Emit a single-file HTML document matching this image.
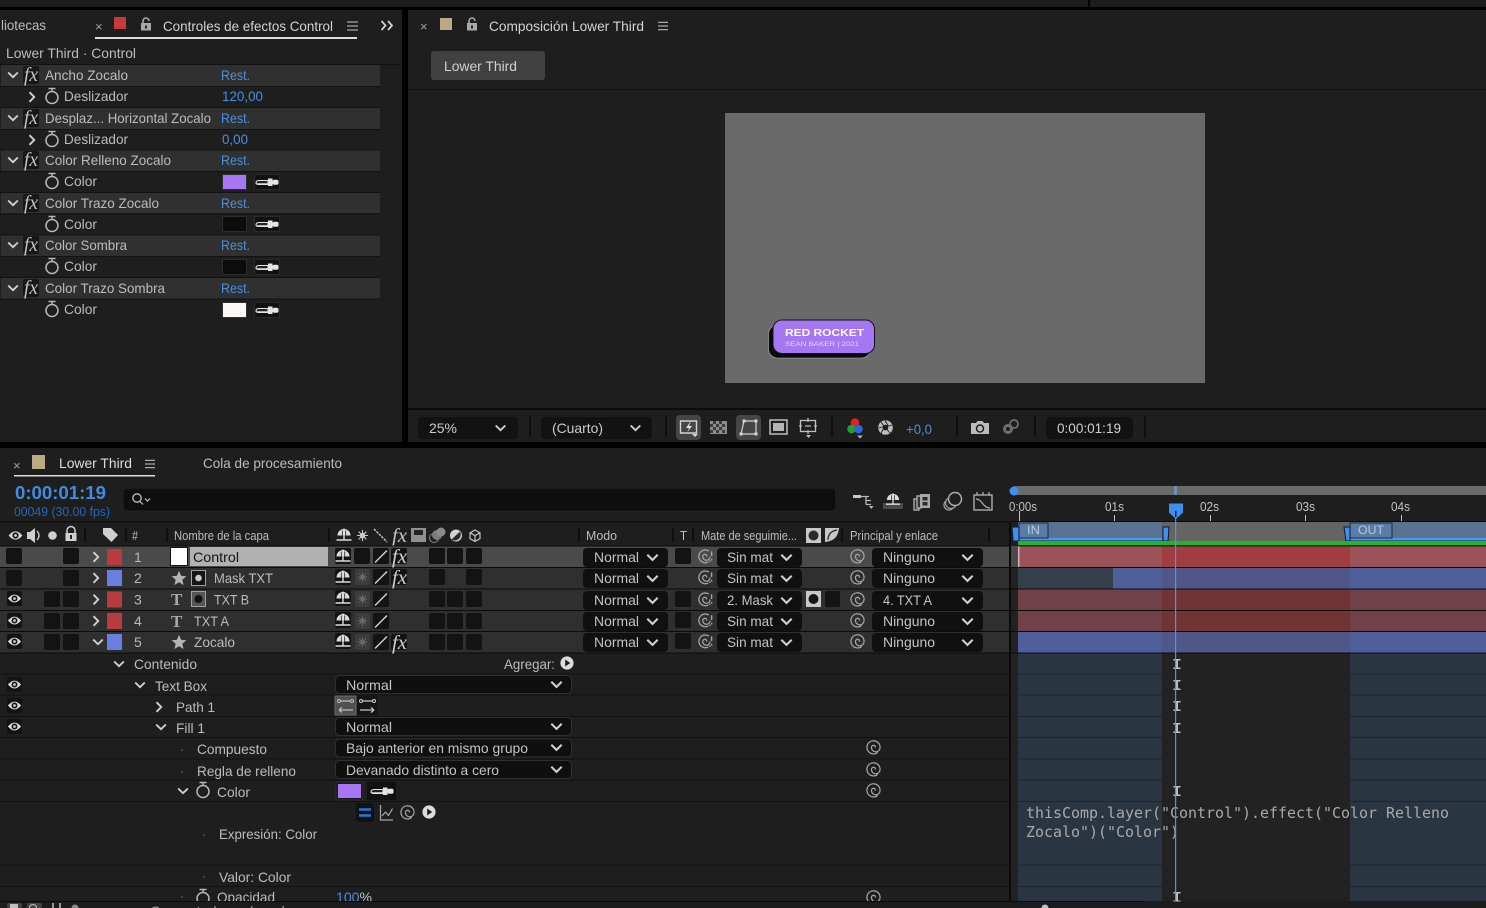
<!DOCTYPE html>
<html><head><meta charset="utf-8"><title>After Effects</title>
<style>
html,body{margin:0;padding:0;background:#000;width:1486px;height:908px;overflow:hidden}
svg{display:block}
text{white-space:pre}
</style></head><body>
<svg width="1486" height="908" viewBox="0 0 1486 908" xmlns="http://www.w3.org/2000/svg" font-family="'Liberation Sans',sans-serif" font-size="14" fill="#bcbcbc">
<defs>
<symbol id="cd" viewBox="0 0 12 8"><path d="M1.2 1.5L6 6.2L10.8 1.5" fill="none" stroke="#d0d0d0" stroke-width="1.9"/></symbol>
<symbol id="cr" viewBox="0 0 8 12"><path d="M1.5 1.2L6.2 6L1.5 10.8" fill="none" stroke="#d0d0d0" stroke-width="1.9"/></symbol>
<symbol id="sw" viewBox="0 0 16 18"><circle cx="8" cy="10.5" r="6" fill="none" stroke="#b8b8b8" stroke-width="1.5"/><path d="M4.5 1.5h7M8 1.5v3" stroke="#b8b8b8" stroke-width="1.4"/></symbol>
<symbol id="eye" viewBox="0 0 16 12"><path d="M.5 6Q8 -3 15.500 6Q8 15 .5 6Z" fill="#dcdcdc"/><circle cx="8" cy="6" r="3.4" fill="#171717"/><circle cx="8" cy="6" r="1.5" fill="#dcdcdc"/></symbol>
<symbol id="sp" viewBox="0 0 16 16"><path d="M12.500 13.200A7 7 0 1 1 15 8A4.600 4.600 0 0 1 10.400 12.600A4.600 4.600 0 0 1 5.800 8A2.400 2.400 0 0 1 8.200 5.600A2 2 0 0 1 10 8" fill="none" stroke="#a6a6a6" stroke-width="1.300"/></symbol>
<symbol id="sp2" viewBox="0 0 16 16"><path d="M11 13.800A6.800 6.800 0 1 1 11.500 2.200M13 8A4 4 0 0 1 9 12A4 4 0 0 1 5 8A2.400 2.400 0 0 1 7.400 5.600A2 2 0 0 1 9.200 8" fill="none" stroke="#a6a6a6" stroke-width="1.300"/><path d="M14.500 2.500v5M14.500 10.500v1.800M12 13h1.500" stroke="#a6a6a6" stroke-width="1.500"/></symbol>
<symbol id="shy" viewBox="0 0 16 16"><path d="M1.500 8.500A6.500 6.500 0 0 1 14.500 8.500Z" fill="#dcdcdc"/><path d="M8 1.500v12M.5 13h15" stroke="#dcdcdc" stroke-width="1.400"/><path d="M6.300 3.500v5M9.700 3.500v5" stroke="#222" stroke-width=".8"/></symbol>
<symbol id="sun" viewBox="0 0 14 14"><circle cx="7" cy="7" r="3" fill="currentColor"/><path d="M7 1v12M1 7h12M2.800 2.800l8.400 8.400M11.200 2.800l-8.400 8.400" stroke="currentColor" stroke-width="1.200"/></symbol>
<symbol id="pk" viewBox="1 0 24 12"><path d="M2 7Q2 4.500 5 4.500L14 4.500L14 8.500L5 8.500Q2 8.500 2 7Z" fill="#222" stroke="#e4e4e4" stroke-width="1.100"/><path d="M2.500 7.200L14 7.200V8.700H5Z" fill="#e4e4e4"/><rect x="14" y="2.500" width="4.500" height="7.500" fill="#e4e4e4"/><rect x="18.500" y="3.800" width="6" height="5" rx="1.500" fill="#e4e4e4"/></symbol>
<symbol id="menu" viewBox="0 0 11 10"><path d="M0 1h11M0 5h11M0 9h11" stroke="#a8a8a8" stroke-width="1.300"/></symbol>
<symbol id="lock" viewBox="0 0 12 14"><path d="M3 6V4a3 3 0 0 1 6 0" fill="none" stroke="#a8a8a8" stroke-width="1.600"/><rect x="1" y="6" width="10" height="7.500" fill="#a8a8a8"/><rect x="5" y="8.500" width="2" height="3" fill="#222"/></symbol>
<symbol id="ibeam" viewBox="0 0 8 10"><path d="M.5 .8h7M.5 9.200h7" stroke="#c0c0c0" stroke-width="1.500"/><path d="M4 .8v8.400" stroke="#c0c0c0" stroke-width="2"/></symbol>
<symbol id="star" viewBox="0 0 16 16"><path d="M8 .8L10.100 5.800L15.400 6.200L11.300 9.700L12.600 15L8 12.200L3.400 15L4.700 9.700L.6 6.200L5.900 5.800Z" fill="#b4b4b4"/></symbol>
<symbol id="play" viewBox="0 0 14 14"><circle cx="7" cy="7" r="6.600" fill="#dcdcdc"/><path d="M5.200 3.500L10.200 7L5.200 10.500Z" fill="#1c1c1c"/></symbol>
<g id="ddl"><rect width="85" height="19" rx="4" fill="#101010"/></g>
<g id="b15"><rect width="16" height="16" rx="2" fill="#131313"/></g>
<g id="slash"><rect width="16" height="16" rx="2" fill="#131313"/><path d="M2 14.500L14 2.500" stroke="#d0d0d0" stroke-width="1.500"/></g>
<g id="shybox"><rect width="16" height="16" rx="2" fill="#131313"/><use href="#shy" x="0" y="0" width="16" height="16"/></g>
<g id="sunbox" color="#6a6a6a"><rect width="15" height="16" rx="2" fill="#3c3c3c"/><use href="#sun" x="2" y="2.500" width="11" height="11"/></g>
<g id="eyebox"><rect width="15" height="15" rx="2" fill="#131313"/><use href="#eye" x=".5" y="2" width="14" height="11"/></g>
</defs>

<!-- background -->
<rect width="1486" height="908" fill="#000"/>
<rect width="1486" height="7" fill="#1c1c1c"/>
<rect x="1088" width="2" height="7" fill="#000"/>
<rect x="0" y="10" width="402" height="432" fill="#1e1e1e"/>
<rect x="408" y="10" width="1078" height="432" fill="#1e1e1e"/>
<rect x="0" y="448" width="1486" height="460" fill="#1e1e1e"/>

<!-- Effects panel -->
<text x="1" y="30" textLength="45" lengthAdjust="spacingAndGlyphs">liotecas</text>
<text x="95" y="31" font-size="13" fill="#a0a0a0">×</text>
<rect x="114" y="17" width="12" height="12" fill="#c63a3e"/>
<use href="#lock" x="140" y="17" width="12" height="14"/>
<text x="163" y="31" textLength="170" lengthAdjust="spacingAndGlyphs" fill="#d2d2d2">Controles de efectos Control</text>
<use href="#menu" x="347" y="21" width="11" height="10"/>
<path d="M381.500 21l4 4.500-4 4.500M388 21l4 4.500-4 4.500" fill="none" stroke="#d0d0d0" stroke-width="1.800"/>
<rect x="95" y="37" width="262" height="2" fill="#dcdcdc"/>
<text x="6" y="58" textLength="130" lengthAdjust="spacingAndGlyphs">Lower Third · Control</text>
<rect x="0" y="64" width="400" height="1" fill="#111"/>

<g fill="#303030">
<rect x="1" y="65" width="379" height="21"/><rect x="1" y="107.500" width="379" height="21.500"/><rect x="1" y="150" width="379" height="21"/><rect x="1" y="192" width="379" height="21"/><rect x="1" y="235" width="379" height="21"/><rect x="1" y="277" width="379" height="21.500"/>
</g>
<g fill="#121212">
<rect x="0" y="86" width="380" height="1"/><rect x="0" y="107" width="380" height="1"/><rect x="0" y="129" width="380" height="1"/><rect x="0" y="149.500" width="380" height="1"/><rect x="0" y="171" width="380" height="1"/><rect x="0" y="192" width="380" height="1"/><rect x="0" y="213.500" width="380" height="1"/><rect x="0" y="234.500" width="380" height="1"/><rect x="0" y="256" width="380" height="1"/><rect x="0" y="277" width="380" height="1"/><rect x="0" y="298.500" width="380" height="1"/>
</g>
<!-- fx boxes -->
<g fill="#161616">
<rect x="23" y="66" width="16" height="18" rx="2"/><rect x="23" y="109" width="16" height="18" rx="2"/><rect x="23" y="151" width="16" height="18" rx="2"/><rect x="23" y="194" width="16" height="18" rx="2"/><rect x="23" y="236" width="16" height="18" rx="2"/><rect x="23" y="279" width="16" height="18" rx="2"/>
</g>
<g font-family="'Liberation Serif',serif" font-style="italic" font-size="20" fill="#c4c4c4">
<text x="24" y="81" textLength="14" lengthAdjust="spacingAndGlyphs">fx</text><text x="24" y="124" textLength="14" lengthAdjust="spacingAndGlyphs">fx</text><text x="24" y="166" textLength="14" lengthAdjust="spacingAndGlyphs">fx</text><text x="24" y="209" textLength="14" lengthAdjust="spacingAndGlyphs">fx</text><text x="24" y="251" textLength="14" lengthAdjust="spacingAndGlyphs">fx</text><text x="24" y="294" textLength="14" lengthAdjust="spacingAndGlyphs">fx</text>
</g>
<use href="#cd" x="7" y="71" width="12" height="8"/><use href="#cd" x="7" y="114" width="12" height="8"/><use href="#cd" x="7" y="156" width="12" height="8"/><use href="#cd" x="7" y="199" width="12" height="8"/><use href="#cd" x="7" y="241" width="12" height="8"/><use href="#cd" x="7" y="284" width="12" height="8"/>
<use href="#cr" x="28" y="91" width="8" height="12"/><use href="#cr" x="28" y="134" width="8" height="12"/>
<use href="#sw" x="44" y="87" width="16" height="18"/><use href="#sw" x="44" y="130" width="16" height="18"/><use href="#sw" x="44" y="172" width="16" height="18"/><use href="#sw" x="44" y="215" width="16" height="18"/><use href="#sw" x="44" y="257" width="16" height="18"/><use href="#sw" x="44" y="300" width="16" height="18"/>

<text x="45" y="80" textLength="83" lengthAdjust="spacingAndGlyphs">Ancho Zocalo</text>
<text x="64" y="101" textLength="64" lengthAdjust="spacingAndGlyphs">Deslizador</text>
<text x="45" y="123" textLength="166" lengthAdjust="spacingAndGlyphs">Desplaz... Horizontal Zocalo</text>
<text x="64" y="144" textLength="64" lengthAdjust="spacingAndGlyphs">Deslizador</text>
<text x="45" y="165" textLength="126" lengthAdjust="spacingAndGlyphs">Color Relleno Zocalo</text>
<text x="64" y="186" textLength="33" lengthAdjust="spacingAndGlyphs">Color</text>
<text x="45" y="208" textLength="114" lengthAdjust="spacingAndGlyphs">Color Trazo Zocalo</text>
<text x="64" y="229" textLength="33" lengthAdjust="spacingAndGlyphs">Color</text>
<text x="45" y="250" textLength="82" lengthAdjust="spacingAndGlyphs">Color Sombra</text>
<text x="64" y="271" textLength="33" lengthAdjust="spacingAndGlyphs">Color</text>
<text x="45" y="293" textLength="120" lengthAdjust="spacingAndGlyphs">Color Trazo Sombra</text>
<text x="64" y="314" textLength="33" lengthAdjust="spacingAndGlyphs">Color</text>
<g fill="#4a8ee0">
<text x="221" y="80" textLength="29" lengthAdjust="spacingAndGlyphs">Rest.</text>
<text x="222" y="101" textLength="41" lengthAdjust="spacingAndGlyphs">120,00</text>
<text x="221" y="123" textLength="29" lengthAdjust="spacingAndGlyphs">Rest.</text>
<text x="222" y="144" textLength="26" lengthAdjust="spacingAndGlyphs">0,00</text>
<text x="221" y="165" textLength="29" lengthAdjust="spacingAndGlyphs">Rest.</text>
<text x="221" y="208" textLength="29" lengthAdjust="spacingAndGlyphs">Rest.</text>
<text x="221" y="250" textLength="29" lengthAdjust="spacingAndGlyphs">Rest.</text>
<text x="221" y="293" textLength="29" lengthAdjust="spacingAndGlyphs">Rest.</text>
</g>
<!-- swatches -->
<g stroke="#2e2e2e" stroke-width="1">
<rect x="222.500" y="174.500" width="24" height="15" fill="#a777f3"/>
<rect x="222.500" y="216.500" width="24" height="15" fill="#0c0c0c"/>
<rect x="222.500" y="259.500" width="24" height="15" fill="#0c0c0c"/>
<rect x="222.500" y="302.500" width="24" height="15" fill="#fdf8f8"/>
</g>
<g fill="#111" stroke="#2a2a2a"><rect x="254.500" y="174.500" width="25" height="15"/><rect x="254.500" y="216.500" width="25" height="15"/><rect x="254.500" y="259.500" width="25" height="15"/><rect x="254.500" y="302.500" width="25" height="15"/></g>
<use href="#pk" x="255" y="176" width="24" height="12"/><use href="#pk" x="255" y="218" width="24" height="12"/><use href="#pk" x="255" y="261" width="24" height="12"/><use href="#pk" x="255" y="304" width="24" height="12"/>

<!-- Composition panel -->
<text x="420" y="31" font-size="13" fill="#a0a0a0">×</text>
<rect x="440" y="18" width="12" height="12" fill="#bda983"/>
<use href="#lock" x="466" y="17" width="12" height="14"/>
<text x="489" y="31" textLength="155" lengthAdjust="spacingAndGlyphs" fill="#d2d2d2">Composición Lower Third</text>
<use href="#menu" x="658" y="21" width="10" height="10"/>
<rect x="431" y="51" width="114" height="29" rx="3" fill="#414141"/>
<text x="444" y="71" textLength="73" lengthAdjust="spacingAndGlyphs" fill="#d0d0d0">Lower Third</text>
<rect x="408" y="89" width="1078" height="1" fill="#121212"/>
<rect x="725" y="113" width="480" height="270" fill="#6a6a6a"/>
<!-- lower third -->
<rect x="768.500" y="325" width="102" height="33" rx="9" fill="#0a0a0a" stroke="#b9b3b3" stroke-width=".6"/>
<rect x="773" y="320" width="101.500" height="33.500" rx="9" fill="#a677f3" stroke="#15101e" stroke-width="1"/>
<text x="785" y="336" font-size="10" font-weight="bold" fill="#fff" textLength="79" lengthAdjust="spacingAndGlyphs">RED ROCKET</text>
<text x="785" y="346" font-size="6.500" fill="#e6d8fc" textLength="74" lengthAdjust="spacingAndGlyphs">SEAN BAKER | 2021</text>

<!-- viewer toolbar -->
<rect x="408" y="408" width="1078" height="2" fill="#0c0c0c"/>
<rect x="418" y="417" width="100" height="22" rx="4" fill="#121212"/>
<text x="429" y="433" textLength="28" lengthAdjust="spacingAndGlyphs" fill="#cccccc">25%</text>
<use href="#cd" x="494" y="424" width="13" height="8"/>
<rect x="541" y="417" width="111" height="22" rx="4" fill="#121212"/>
<text x="552" y="433" textLength="51" lengthAdjust="spacingAndGlyphs" fill="#cccccc">(Cuarto)</text>
<use href="#cd" x="629" y="424" width="13" height="8"/>
<g fill="#0e0e0e"><rect x="529" y="416" width="2" height="21"/><rect x="665" y="416" width="2" height="21"/><rect x="831" y="416" width="2" height="21"/><rect x="956" y="416" width="2" height="21"/><rect x="1034" y="416" width="2" height="21"/><rect x="1144" y="416" width="2" height="21"/></g>
<rect x="676" y="415" width="25" height="25" rx="4" fill="#454545"/>
<rect x="736" y="415" width="25" height="25" rx="4" fill="#454545"/>
<path d="M680.500 421h16v12h-16z" fill="none" stroke="#d4d4d4" stroke-width="1.400"/>
<path d="M690 422l-4 6h3l-1.500 4 4.500-6h-3l1.500-4z" fill="#e0e0e0"/>
<path d="M692 434h6l-3 3z" fill="#d4d4d4"/>
<g><rect x="710" y="421" width="17" height="13" fill="#8c8c8c"/><path d="M713 421h3v3h-3zM719 421h3v3h-3zM710 424h3v3h-3zM716 424h3v3h-3zM722 424h3v3h-3zM713 427h3v3h-3zM719 427h3v3h-3zM710 430h3v3h-3zM716 430h3v3h-3zM722 430h3v3h-3z" fill="#3c3c3c"/></g>
<path d="M744 421h12v13h-15z" fill="none" stroke="#d4d4d4" stroke-width="1.200"/>
<path d="M742.500 419.500h3v3h-3zM754.500 419.500h3v3h-3zM739.500 432.500h3v3h-3zM754.500 432.500h3v3h-3z" fill="#d4d4d4"/>
<rect x="770" y="420" width="17" height="14" fill="none" stroke="#c8c8c8" stroke-width="1.400"/><rect x="773" y="423" width="11" height="8" fill="#b4b4b4"/>
<rect x="800.500" y="420.500" width="15" height="11" fill="none" stroke="#c0c0c0" stroke-width="1.300"/><path d="M808 418v4M808 430v4M805 426h6M799 426h3M814 426h3" stroke="#c0c0c0" stroke-width="1.200"/><path d="M806 435h5l-2.500 3z" fill="#c0c0c0"/>
<circle cx="855" cy="422.500" r="4.300" fill="#e02222"/><circle cx="851.500" cy="429" r="4.300" fill="#1fa02f"/><circle cx="858.500" cy="429" r="4.300" fill="#2a66e0"/><path d="M857 435.500h6l-3 3z" fill="#b8b8b8"/>
<circle cx="885.500" cy="427.500" r="7.300" fill="#bcbcbc"/><circle cx="885.500" cy="427.500" r="2.800" fill="#1e1e1e"/><path d="M885 420.500l3 5M892 425l-5.500 1.500M890 433l-3.500-4M881 433.500l2.500-5M878.500 428l5.500-1.500M881 422l3 4" stroke="#1e1e1e" stroke-width=".9"/>
<text x="906" y="434" textLength="26" lengthAdjust="spacingAndGlyphs" fill="#4a8ee0">+0,0</text>
<path d="M971 423h5l1.500-2h5l1.500 2h5v11h-18z" fill="#bcbcbc"/><circle cx="980" cy="428.500" r="3.500" fill="#bcbcbc" stroke="#1e1e1e" stroke-width="1.500"/>
<circle cx="1008" cy="429" r="5" fill="#6f6f6f"/><circle cx="1008" cy="429" r="2" fill="#1e1e1e"/><circle cx="1014" cy="424" r="4" fill="none" stroke="#6f6f6f" stroke-width="1.800"/>
<rect x="1046" y="417" width="87" height="22" rx="4" fill="#121212"/>
<text x="1057" y="433" textLength="64" lengthAdjust="spacingAndGlyphs" fill="#d0d0d0">0:00:01:19</text>

<!-- Timeline header -->
<text x="13" y="470" font-size="13" fill="#a0a0a0">×</text>
<rect x="32" y="455" width="13" height="14" fill="#bda983"/>
<text x="59" y="468" textLength="73" lengthAdjust="spacingAndGlyphs" fill="#dcdcdc">Lower Third</text>
<use href="#menu" x="145" y="459" width="10" height="10"/>
<rect x="14" y="475" width="141" height="1.500" fill="#dcdcdc"/>
<text x="203" y="468" textLength="139" lengthAdjust="spacingAndGlyphs">Cola de procesamiento</text>
<text x="15" y="499" font-size="18" font-weight="bold" fill="#3f8ce0" textLength="91" lengthAdjust="spacingAndGlyphs">0:00:01:19</text>
<text x="14" y="516" font-size="12.500" fill="#2067ba" textLength="96" lengthAdjust="spacingAndGlyphs">00049 (30.00 fps)</text>
<rect x="123" y="488" width="713" height="23" rx="4" fill="#0e0e0e" stroke="#242424"/>
<circle cx="137" cy="498" r="4.200" fill="none" stroke="#c4c4c4" stroke-width="1.300"/><path d="M140 501.500l3 3M145 498.500l2.500 2.500 2.500-2.500" fill="none" stroke="#c4c4c4" stroke-width="1.200"/>
<!-- top right icon row -->
<rect x="853" y="495" width="8" height="3" fill="#c8c8c8"/><path d="M861 496.500h8M866 496.500v8M866 500.500h5M866 504.500h5" stroke="#b8b8b8" stroke-width="1.300" fill="none"/><path d="M869 506h4.500l-2.200 3z" fill="#b8b8b8"/>
<rect x="883" y="503" width="20" height="6" fill="#4a4a4a"/><use href="#shy" x="884" y="492" width="18" height="15"/>
<path d="M914 499h5v11h-5z" fill="#333" stroke="#a8a8a8" stroke-width="1.400"/><path d="M917 496h4v12h-4z" fill="#333" stroke="#a8a8a8" stroke-width="1.400"/><rect x="920" y="494" width="10" height="14" fill="#a8a8a8"/><rect x="922.500" y="497" width="5" height="3.500" fill="#2a2a2a"/><rect x="922.500" y="502" width="5" height="3.500" fill="#2a2a2a"/>
<circle cx="949" cy="505" r="5" fill="none" stroke="#a0a0a0" stroke-width="1.200"/><circle cx="951" cy="503" r="5.500" fill="#1e1e1e" stroke="#a0a0a0" stroke-width="1.200"/><circle cx="955" cy="499" r="6.500" fill="#1e1e1e" stroke="#b0b0b0" stroke-width="1.400"/>
<rect x="974" y="495" width="18" height="15" fill="none" stroke="#b8b8b8" stroke-width="1.300"/><path d="M976 499c6 0 7 9 14 9M977 492v3M983 492v3M989 492v3" fill="none" stroke="#b8b8b8" stroke-width="1.200"/>

<rect x="0" y="521" width="1009" height="1.500" fill="#0f0f0f"/>
<!-- column icons -->
<use href="#eye" x="8" y="530" width="15" height="11"/>
<path d="M27 532h3l5-4v15l-5-4h-3z" fill="#cfcfcf"/><path d="M37 531q4 4.500 0 9" fill="none" stroke="#cfcfcf" stroke-width="1.300"/>
<circle cx="52.500" cy="535.500" r="4.300" fill="#cfcfcf"/>
<path d="M67 533v-2.500a4 4 0 0 1 8 0v2.500" fill="none" stroke="#cfcfcf" stroke-width="1.500"/><rect x="65.500" y="533" width="11" height="8" fill="#cfcfcf"/><rect x="70" y="535" width="2" height="4" fill="#222"/>
<path d="M103 528h8l7 7-6.500 7-8.500-8z" fill="#cfcfcf"/>
<g fill="#0f0f0f"><rect x="84" y="528" width="2" height="14"/><rect x="125" y="528" width="2" height="14"/><rect x="166" y="528" width="2" height="14"/><rect x="328" y="528" width="2" height="14"/><rect x="578" y="528" width="2" height="14"/><rect x="672" y="528" width="2" height="14"/><rect x="692" y="528" width="2" height="14"/><rect x="841" y="528" width="2" height="14"/><rect x="988" y="528" width="2" height="14"/></g>
<g font-size="12.500">
<text x="132" y="540" textLength="6" lengthAdjust="spacingAndGlyphs">#</text>
<text x="174" y="540" textLength="95" lengthAdjust="spacingAndGlyphs">Nombre de la capa</text>
<text x="586" y="540" textLength="31" lengthAdjust="spacingAndGlyphs">Modo</text>
<text x="680" y="540" textLength="7" lengthAdjust="spacingAndGlyphs">T</text>
<text x="701" y="540" textLength="96" lengthAdjust="spacingAndGlyphs">Mate de seguimie...</text>
<text x="850" y="540" textLength="88" lengthAdjust="spacingAndGlyphs">Principal y enlace</text>
</g>
<use href="#shy" x="336" y="527" width="16" height="16"/>
<g color="#c8c8c8"><use href="#sun" x="356" y="529" width="13" height="13"/></g>
<path d="M374 529l13 13" stroke="#c8c8c8" stroke-width="1.400" stroke-dasharray="2.500 1"/>
<text x="392" y="542" font-family="'Liberation Serif',serif" font-style="italic" font-size="20" fill="#c4c4c4" textLength="15" lengthAdjust="spacingAndGlyphs">fx</text>
<rect x="411" y="528" width="15" height="14" fill="#8f8f8f"/><rect x="414" y="530" width="9" height="5" fill="#242424"/>
<circle cx="434" cy="538" r="4.500" fill="none" stroke="#8a8a8a"/><circle cx="437" cy="535" r="5" fill="#7c7c7c"/><circle cx="441" cy="532" r="4.500" fill="#8a8a8a"/>
<circle cx="456" cy="535.500" r="6" fill="#d2d2d2"/><path d="M451.500 539.500L460 531.500A6 6 0 0 1 451.500 539.500Z" fill="#2a2a2a"/>
<path d="M475 530l5 2.800v5.800l-5 2.800-5-2.800v-5.800zM470 532.800l5 2.800 5-2.800M475 535.600v6" fill="none" stroke="#c4c4c4" stroke-width="1.200"/>
<rect x="806" y="528" width="15" height="15" fill="#c8c8c8"/><circle cx="813.500" cy="535.500" r="5" fill="#2a2a2a"/>
<path d="M825 528h14c-1 9-5 13-14 14z" fill="#c8c8c8"/><path d="M828 540c0-6 3-9 9-10" fill="none" stroke="#222" stroke-width="1.200"/>

<!-- Layer rows -->
<rect x="0" y="546" width="1009" height="21" fill="#4a4a4a"/>
<rect x="0" y="568" width="1009" height="20.500" fill="#2f2f2f"/>
<rect x="0" y="589.500" width="1009" height="20.500" fill="#2f2f2f"/>
<rect x="0" y="611" width="1009" height="20" fill="#2f2f2f"/>
<rect x="0" y="632" width="1009" height="20.500" fill="#2f2f2f"/>
<g fill="#0b0b0b"><rect y="545.500" width="1009" height="1"/><rect y="567" width="1009" height="1"/><rect y="588.500" width="1009" height="1"/><rect y="610" width="1009" height="1"/><rect y="631" width="1009" height="1"/><rect y="652.500" width="1009" height="1"/></g>

<!-- row 1 -->
<use href="#b15" x="6" y="548"/><use href="#b15" x="63" y="548"/>
<use href="#cr" x="92" y="551" width="8" height="12"/>
<rect x="107" y="549" width="15" height="16" fill="#b93b3d"/>
<text x="134" y="562" fill="#b8b8b8">1</text>
<rect x="170.500" y="547.500" width="17" height="18" fill="#fff" stroke="#111"/>
<rect x="190" y="547" width="138" height="19" fill="#b1b1b1"/>
<text x="193" y="562" textLength="46" lengthAdjust="spacingAndGlyphs" fill="#151515">Control</text>
<use href="#shybox" x="335" y="548"/><use href="#b15" x="354" y="548"/><use href="#slash" x="373" y="548"/>
<rect x="391" y="548" width="16" height="16" rx="2" fill="#131313"/><text x="392" y="563" font-family="'Liberation Serif',serif" font-style="italic" font-size="20" fill="#cfcfcf" textLength="15" lengthAdjust="spacingAndGlyphs">fx</text>
<use href="#b15" x="429" y="548"/><use href="#b15" x="447" y="548"/><use href="#b15" x="466" y="548"/>
<!-- row 2 -->
<use href="#b15" x="6" y="570"/><use href="#b15" x="63" y="570"/>
<use href="#cr" x="92" y="572" width="8" height="12"/>
<rect x="107" y="570" width="15" height="16" fill="#6a80e0"/>
<text x="134" y="583" fill="#b8b8b8">2</text>
<use href="#star" x="171" y="570" width="16" height="16"/>
<rect x="191.500" y="570.500" width="14" height="15" fill="#151515" stroke="#a0a0a0"/><circle cx="198.500" cy="578" r="3.300" fill="#c8c8c8"/>
<text x="214" y="583" textLength="59" lengthAdjust="spacingAndGlyphs">Mask TXT</text>
<use href="#shybox" x="335" y="569"/><use href="#sunbox" x="355" y="569"/><use href="#slash" x="373" y="569"/>
<rect x="391" y="569" width="16" height="16" rx="2" fill="#131313"/><text x="392" y="584" font-family="'Liberation Serif',serif" font-style="italic" font-size="20" fill="#cfcfcf" textLength="15" lengthAdjust="spacingAndGlyphs">fx</text>
<use href="#b15" x="429" y="569"/><use href="#b15" x="466" y="569"/>
<!-- row 3 -->
<use href="#eyebox" x="7" y="591"/><use href="#b15" x="44" y="591"/><use href="#b15" x="63" y="591"/>
<use href="#cr" x="92" y="593.500" width="8" height="12"/>
<rect x="107" y="591.500" width="15" height="16" fill="#b93b3d"/>
<text x="134" y="604.500" fill="#b8b8b8">3</text>
<text x="171" y="605" font-family="'Liberation Serif',serif" font-weight="bold" font-size="17" fill="#a8a8a8">T</text>
<rect x="191.500" y="591.500" width="14" height="15" fill="#555" stroke="#a0a0a0"/><circle cx="198.500" cy="599" r="4" fill="#111"/>
<text x="214" y="604.500" textLength="35" lengthAdjust="spacingAndGlyphs">TXT B</text>
<use href="#shybox" x="335" y="590"/><use href="#sunbox" x="355" y="591"/><use href="#slash" x="373" y="591"/>
<use href="#b15" x="429" y="591"/><use href="#b15" x="447" y="591"/><use href="#b15" x="466" y="591"/>
<!-- row 4 -->
<use href="#eyebox" x="7" y="613"/><use href="#b15" x="44" y="613"/><use href="#b15" x="63" y="613"/>
<use href="#cr" x="92" y="615" width="8" height="12"/>
<rect x="107" y="613" width="15" height="16" fill="#b93b3d"/>
<text x="134" y="626" fill="#b8b8b8">4</text>
<text x="171" y="627" font-family="'Liberation Serif',serif" font-weight="bold" font-size="17" fill="#a8a8a8">T</text>
<text x="194" y="626" textLength="35" lengthAdjust="spacingAndGlyphs">TXT A</text>
<use href="#shybox" x="335" y="612"/><use href="#sunbox" x="355" y="613"/><use href="#slash" x="373" y="613"/>
<use href="#b15" x="429" y="613"/><use href="#b15" x="447" y="613"/><use href="#b15" x="466" y="613"/>
<!-- row 5 -->
<use href="#eyebox" x="7" y="634"/><use href="#b15" x="44" y="634"/><use href="#b15" x="63" y="634"/>
<use href="#cd" x="92" y="638" width="12" height="8"/>
<rect x="107" y="634" width="15" height="16" fill="#6a80e0"/>
<text x="134" y="647" fill="#b8b8b8">5</text>
<use href="#star" x="171" y="634" width="16" height="16"/>
<text x="194" y="647" textLength="41" lengthAdjust="spacingAndGlyphs">Zocalo</text>
<use href="#shybox" x="335" y="633"/><use href="#sunbox" x="355" y="634"/><use href="#slash" x="373" y="634"/>
<rect x="391" y="634" width="16" height="16" rx="2" fill="#131313"/><text x="392" y="649" font-family="'Liberation Serif',serif" font-style="italic" font-size="20" fill="#cfcfcf" textLength="15" lengthAdjust="spacingAndGlyphs">fx</text>
<use href="#b15" x="429" y="634"/><use href="#b15" x="447" y="634"/><use href="#b15" x="466" y="634"/>

<!-- Modo dropdowns -->
<use href="#ddl" x="583" y="548"/><use href="#ddl" x="583" y="569"/><use href="#ddl" x="583" y="591"/><use href="#ddl" x="583" y="612"/><use href="#ddl" x="583" y="633"/>
<g fill="#c4c4c4">
<text x="594" y="562" textLength="45" lengthAdjust="spacingAndGlyphs">Normal</text>
<text x="594" y="583" textLength="45" lengthAdjust="spacingAndGlyphs">Normal</text>
<text x="594" y="605" textLength="45" lengthAdjust="spacingAndGlyphs">Normal</text>
<text x="594" y="626" textLength="45" lengthAdjust="spacingAndGlyphs">Normal</text>
<text x="594" y="647" textLength="45" lengthAdjust="spacingAndGlyphs">Normal</text>
</g>
<use href="#cd" x="646" y="553" width="13" height="9"/><use href="#cd" x="646" y="574" width="13" height="9"/><use href="#cd" x="646" y="596" width="13" height="9"/><use href="#cd" x="646" y="617" width="13" height="9"/><use href="#cd" x="646" y="638" width="13" height="9"/>
<use href="#b15" x="675" y="548"/><use href="#b15" x="675" y="591"/><use href="#b15" x="675" y="612"/><use href="#b15" x="675" y="633"/>
<use href="#sp2" x="698" y="549" width="15" height="15"/><use href="#sp2" x="698" y="570" width="15" height="15"/><use href="#sp2" x="698" y="592" width="15" height="15"/><use href="#sp2" x="698" y="613" width="15" height="15"/><use href="#sp2" x="698" y="634" width="15" height="15"/>
<use href="#ddl" x="717" y="548"/><use href="#ddl" x="717" y="569"/><use href="#ddl" x="717" y="591"/><use href="#ddl" x="717" y="612"/><use href="#ddl" x="717" y="633"/>
<g fill="#c4c4c4">
<text x="727" y="562" textLength="46" lengthAdjust="spacingAndGlyphs">Sin mat</text>
<text x="727" y="583" textLength="46" lengthAdjust="spacingAndGlyphs">Sin mat</text>
<text x="727" y="605" textLength="46" lengthAdjust="spacingAndGlyphs">2. Mask</text>
<text x="727" y="626" textLength="46" lengthAdjust="spacingAndGlyphs">Sin mat</text>
<text x="727" y="647" textLength="46" lengthAdjust="spacingAndGlyphs">Sin mat</text>
</g>
<use href="#cd" x="780" y="553" width="13" height="9"/><use href="#cd" x="780" y="574" width="13" height="9"/><use href="#cd" x="780" y="596" width="13" height="9"/><use href="#cd" x="780" y="617" width="13" height="9"/><use href="#cd" x="780" y="638" width="13" height="9"/>
<rect x="806" y="591" width="15" height="16" fill="#c8c8c8"/><circle cx="813.500" cy="599" r="5" fill="#161616"/><rect x="825" y="591" width="15" height="16" rx="2" fill="#131313"/>
<use href="#sp" x="850" y="549" width="15" height="15"/><use href="#sp" x="850" y="570" width="15" height="15"/><use href="#sp" x="850" y="592" width="15" height="15"/><use href="#sp" x="850" y="613" width="15" height="15"/><use href="#sp" x="850" y="634" width="15" height="15"/>
<g fill="#101010"><rect x="872" y="548" width="111" height="19" rx="4"/><rect x="872" y="569" width="111" height="19" rx="4"/><rect x="872" y="591" width="111" height="19" rx="4"/><rect x="872" y="612" width="111" height="19" rx="4"/><rect x="872" y="633" width="111" height="19" rx="4"/></g>
<g fill="#c4c4c4">
<text x="883" y="562" textLength="52" lengthAdjust="spacingAndGlyphs">Ninguno</text>
<text x="883" y="583" textLength="52" lengthAdjust="spacingAndGlyphs">Ninguno</text>
<text x="883" y="605" textLength="49" lengthAdjust="spacingAndGlyphs">4. TXT A</text>
<text x="883" y="626" textLength="52" lengthAdjust="spacingAndGlyphs">Ninguno</text>
<text x="883" y="647" textLength="52" lengthAdjust="spacingAndGlyphs">Ninguno</text>
</g>
<use href="#cd" x="961" y="553" width="13" height="9"/><use href="#cd" x="961" y="574" width="13" height="9"/><use href="#cd" x="961" y="596" width="13" height="9"/><use href="#cd" x="961" y="617" width="13" height="9"/><use href="#cd" x="961" y="638" width="13" height="9"/>

<!-- property rows -->
<g fill="#111"><rect y="673.500" width="1009" height="1"/><rect y="694.500" width="1009" height="1"/><rect y="716" width="1009" height="1"/><rect y="737" width="1009" height="1"/><rect y="758.500" width="1009" height="1"/><rect y="779.500" width="1009" height="1"/><rect y="801" width="1009" height="1"/><rect y="864.500" width="1009" height="1"/><rect y="886" width="1009" height="1"/></g>
<use href="#cd" x="113" y="660" width="12" height="8"/>
<text x="134" y="669" textLength="63" lengthAdjust="spacingAndGlyphs">Contenido</text>
<text x="504" y="669" textLength="51" lengthAdjust="spacingAndGlyphs">Agregar:</text>
<use href="#play" x="560" y="656" width="14" height="14"/>
<use href="#eyebox" x="7" y="677"/><use href="#eyebox" x="7" y="698"/><use href="#eyebox" x="7" y="719"/>
<use href="#cd" x="134" y="681" width="12" height="8"/>
<text x="155" y="691" textLength="52" lengthAdjust="spacingAndGlyphs">Text Box</text>
<use href="#cr" x="155" y="701" width="8" height="12"/>
<text x="176" y="712" textLength="39" lengthAdjust="spacingAndGlyphs">Path 1</text>
<use href="#cd" x="155" y="723" width="12" height="8"/>
<text x="176" y="733" textLength="29" lengthAdjust="spacingAndGlyphs">Fill 1</text>
<text x="197" y="754" textLength="70" lengthAdjust="spacingAndGlyphs">Compuesto</text>
<text x="197" y="776" textLength="99" lengthAdjust="spacingAndGlyphs">Regla de relleno</text>
<use href="#cd" x="177" y="787" width="12" height="8"/>
<use href="#sw" x="195" y="781" width="16" height="18"/>
<text x="217" y="797" textLength="33" lengthAdjust="spacingAndGlyphs">Color</text>
<text x="219" y="839" textLength="98" lengthAdjust="spacingAndGlyphs">Expresión: Color</text>
<text x="219" y="882" textLength="72" lengthAdjust="spacingAndGlyphs">Valor: Color</text>
<use href="#sw" x="195" y="888" width="16" height="18"/>
<text x="217" y="902" textLength="58" lengthAdjust="spacingAndGlyphs">Opacidad</text>
<text x="336" y="902" textLength="36" lengthAdjust="spacingAndGlyphs" fill="#c0c0c0"><tspan fill="#4a8ee0">100</tspan>%</text>
<g fill="#444"><rect x="181" y="749" width="2" height="2"/><rect x="181" y="771" width="2" height="2"/><rect x="203" y="834" width="2" height="2"/><rect x="203" y="876" width="2" height="2"/><rect x="181" y="896" width="2" height="2"/></g>
<g fill="#0f0f0f" stroke="#303030"><rect x="335.500" y="675.500" width="236" height="18" rx="4"/><rect x="335.500" y="717.500" width="236" height="18" rx="4"/><rect x="335.500" y="739" width="236" height="18" rx="4"/><rect x="335.500" y="760.500" width="236" height="18" rx="4"/></g>
<g fill="#c4c4c4">
<text x="346" y="690" textLength="46" lengthAdjust="spacingAndGlyphs">Normal</text>
<text x="346" y="732" textLength="46" lengthAdjust="spacingAndGlyphs">Normal</text>
<text x="346" y="753" textLength="182" lengthAdjust="spacingAndGlyphs">Bajo anterior en mismo grupo</text>
<text x="346" y="775" textLength="153" lengthAdjust="spacingAndGlyphs">Devanado distinto a cero</text>
</g>
<use href="#cd" x="550" y="680" width="13" height="9"/><use href="#cd" x="550" y="722" width="13" height="9"/><use href="#cd" x="550" y="743" width="13" height="9"/><use href="#cd" x="550" y="765" width="13" height="9"/>
<!-- path direction buttons -->
<rect x="335" y="696" width="21" height="19" fill="#505050" stroke="#6a6a6a"/><rect x="357" y="696" width="21" height="19" fill="#151515"/>
<path d="M340 701h11M339 710h14M339 710l3-2.500M339 710l3 2.500" fill="none" stroke="#bcbcbc" stroke-width="1.200"/>
<circle cx="339" cy="701" r="1.500" fill="none" stroke="#bcbcbc"/><circle cx="352" cy="701" r="1.500" fill="none" stroke="#bcbcbc"/>
<path d="M362 701h11M360 710h14M374 710l-3-2.500M374 710l-3 2.500" fill="none" stroke="#c8c8c8" stroke-width="1.200"/>
<circle cx="361" cy="701" r="1.500" fill="none" stroke="#c8c8c8"/><circle cx="374" cy="701" r="1.500" fill="none" stroke="#c8c8c8"/>
<!-- color row -->
<rect x="336" y="782" width="27" height="18" fill="#1a1a1a" stroke="#2c2c2c"/><rect x="338" y="784" width="23" height="14" fill="#a777f3"/>
<rect x="367" y="782" width="29" height="18" fill="#111"/>
<use href="#pk" x="370" y="785" width="24" height="12"/>
<rect x="356" y="803" width="18" height="19" rx="3" fill="#111"/>
<path d="M359 809.500h12M359 815.500h12" stroke="#2179e0" stroke-width="2.600"/>
<path d="M380.500 805v15h12.500M382 816l3.500-4 3 3.500 4-7" fill="none" stroke="#a8a8a8" stroke-width="1.200"/>
<use href="#sp" x="400" y="805" width="15" height="15"/>
<use href="#play" x="422" y="805" width="14" height="14"/>
<use href="#sp" x="866" y="740" width="15" height="15"/><use href="#sp" x="866" y="762" width="15" height="15"/><use href="#sp" x="866" y="783" width="15" height="15"/><use href="#sp" x="866" y="890" width="15" height="15"/>

<!-- Timeline right side -->
<rect x="1009" y="522" width="2" height="386" fill="#0b0b0b"/>
<rect x="1014" y="486" width="472" height="9" fill="#6b6b6b"/>
<circle cx="1014" cy="491" r="4.500" fill="#3f8ff0"/>
<rect x="1174" y="486" width="3" height="9" fill="#6f8fb5"/>
<g font-size="13" fill="#c4c4c4">
<text x="1009" y="511" textLength="28" lengthAdjust="spacingAndGlyphs">0:00s</text>
<text x="1105" y="511" textLength="19" lengthAdjust="spacingAndGlyphs">01s</text>
<text x="1200" y="511" textLength="19" lengthAdjust="spacingAndGlyphs">02s</text>
<text x="1296" y="511" textLength="19" lengthAdjust="spacingAndGlyphs">03s</text>
<text x="1391" y="511" textLength="19" lengthAdjust="spacingAndGlyphs">04s</text>
</g>
<g fill="#c4c4c4"><rect x="1019" y="511" width="1" height="10"/><rect x="1114" y="515" width="1" height="6"/><rect x="1210" y="515" width="1" height="6"/><rect x="1305" y="515" width="1" height="6"/><rect x="1401" y="515" width="1" height="6"/></g>
<rect x="1011" y="521" width="475" height="1" fill="#0b0b0b"/>
<rect x="1018" y="522" width="144" height="17" fill="#5a7291"/>
<rect x="1162" y="522" width="188" height="19" fill="#646464"/>
<rect x="1350" y="522" width="136" height="17" fill="#5a7291"/>
<rect x="1018" y="538" width="144" height="2.500" fill="#4a9af2"/><rect x="1350" y="538" width="136" height="2.500" fill="#4a9af2"/>
<rect x="1019" y="523" width="29" height="15" fill="#5a7da8" stroke="#1a2a3c"/>
<text x="1027" y="534" font-size="12" fill="#bcc6d2" textLength="13" lengthAdjust="spacingAndGlyphs">IN</text>
<rect x="1350" y="523" width="42" height="15" fill="#5a7da8" stroke="#1a2a3c"/>
<text x="1358" y="534" font-size="12" fill="#bcc6d2" textLength="26" lengthAdjust="spacingAndGlyphs">OUT</text>
<path d="M1012 527h7v14h-6z" fill="#3f8ff0" stroke="#0c1a2a"/>
<path d="M1163 527h6l-1 14h-5z" fill="#3f8ff0" stroke="#0c1a2a"/>
<path d="M1344 527h6v14h-4z" fill="#3f8ff0" stroke="#0c1a2a"/>
<rect x="1018" y="541" width="468" height="4" fill="#1fb52c"/>
<rect x="1018" y="545" width="468" height="1" fill="#0d3d12"/>

<rect x="1011" y="546" width="7" height="362" fill="#222"/>
<rect x="1011" y="546" width="7" height="21" fill="#4a4a4a"/>
<rect x="1018" y="546.500" width="468" height="20.500" fill="#9b5258"/>
<rect x="1162" y="546.500" width="188" height="20.500" fill="#a03d3f"/>
<rect x="1018" y="546.500" width="1.500" height="20.500" fill="#d8b0b0"/>
<rect x="1018" y="568" width="96" height="20.500" fill="#33404c"/>
<rect x="1113" y="568" width="373" height="20.500" fill="#4e5f9c"/>
<rect x="1162" y="568" width="188" height="20.500" fill="#4f5688"/>
<rect x="1018" y="589.500" width="468" height="20.500" fill="#704148"/>
<rect x="1162" y="589.500" width="188" height="20.500" fill="#703434"/>
<rect x="1018" y="611" width="468" height="20" fill="#704148"/>
<rect x="1162" y="611" width="188" height="20" fill="#703434"/>
<rect x="1018" y="632" width="468" height="20.500" fill="#4e5f9c"/>
<rect x="1162" y="632" width="188" height="20.500" fill="#4f5688"/>
<rect x="1018" y="653" width="468" height="248" fill="#2a3542"/>
<rect x="1162" y="653" width="188" height="248" fill="#222"/>
<g fill="#0b0b0b"><rect x="1011" y="567" width="475" height="1"/><rect x="1011" y="588.500" width="475" height="1"/><rect x="1011" y="610" width="475" height="1"/><rect x="1011" y="631" width="475" height="1"/><rect x="1011" y="652.500" width="475" height="1"/></g>
<g fill="#1c252e"><rect x="1011" y="673.500" width="475" height="1"/><rect x="1011" y="694.500" width="475" height="1"/><rect x="1011" y="716" width="475" height="1"/><rect x="1011" y="737" width="475" height="1"/><rect x="1011" y="758.500" width="475" height="1"/><rect x="1011" y="779.500" width="475" height="1"/><rect x="1011" y="801" width="475" height="1"/><rect x="1011" y="864.500" width="475" height="1"/><rect x="1011" y="886" width="475" height="1"/></g>
<use href="#ibeam" x="1173" y="659" width="8" height="10"/><use href="#ibeam" x="1173" y="680" width="8" height="10"/><use href="#ibeam" x="1173" y="701" width="8" height="10"/><use href="#ibeam" x="1173" y="723" width="8" height="10"/><use href="#ibeam" x="1173" y="786" width="8" height="10"/><use href="#ibeam" x="1173" y="892" width="8" height="10"/>
<g font-family="'DejaVu Sans Mono',monospace" font-size="15" fill="#a9a9a9">
<text x="1026" y="818" textLength="423" lengthAdjust="spacingAndGlyphs">thisComp.layer("Control").effect("Color Relleno</text>
<text x="1026" y="837" textLength="153" lengthAdjust="spacingAndGlyphs">Zocalo")("Color")</text>
</g>
<rect x="1175" y="504" width="1.200" height="400" fill="#4a96ec"/>
<path d="M1169 503.500h14v9l-7 6.500-7-6.500z" fill="#3f8ff0"/><rect x="1175" y="511" width="1.500" height="6" fill="#123"/>

<!-- bottom strip -->
<rect x="0" y="901.500" width="1486" height="6.500" fill="#1c1c1c"/>
<rect y="901" width="1145" height="1" fill="#0b0b0b"/>
<rect x="7" y="903" width="15" height="5" rx="2" fill="#444"/><rect x="10" y="904" width="8" height="4" fill="#c0c0c0"/>
<rect x="27" y="903" width="15" height="5" rx="2" fill="#444"/><circle cx="33" cy="908" r="3.500" fill="none" stroke="#c0c0c0"/>
<path d="M53 903v5M60 903v5" stroke="#c0c0c0" stroke-width="1.500"/>
<circle cx="75" cy="908" r="3.500" fill="#888"/>
<text x="150" y="916" textLength="150" lengthAdjust="spacingAndGlyphs" fill="#9a9a9a">Conmutadores / modos</text>
<circle cx="1045" cy="908" r="3.500" fill="#c0c0c0"/>
</svg>
</body></html>
